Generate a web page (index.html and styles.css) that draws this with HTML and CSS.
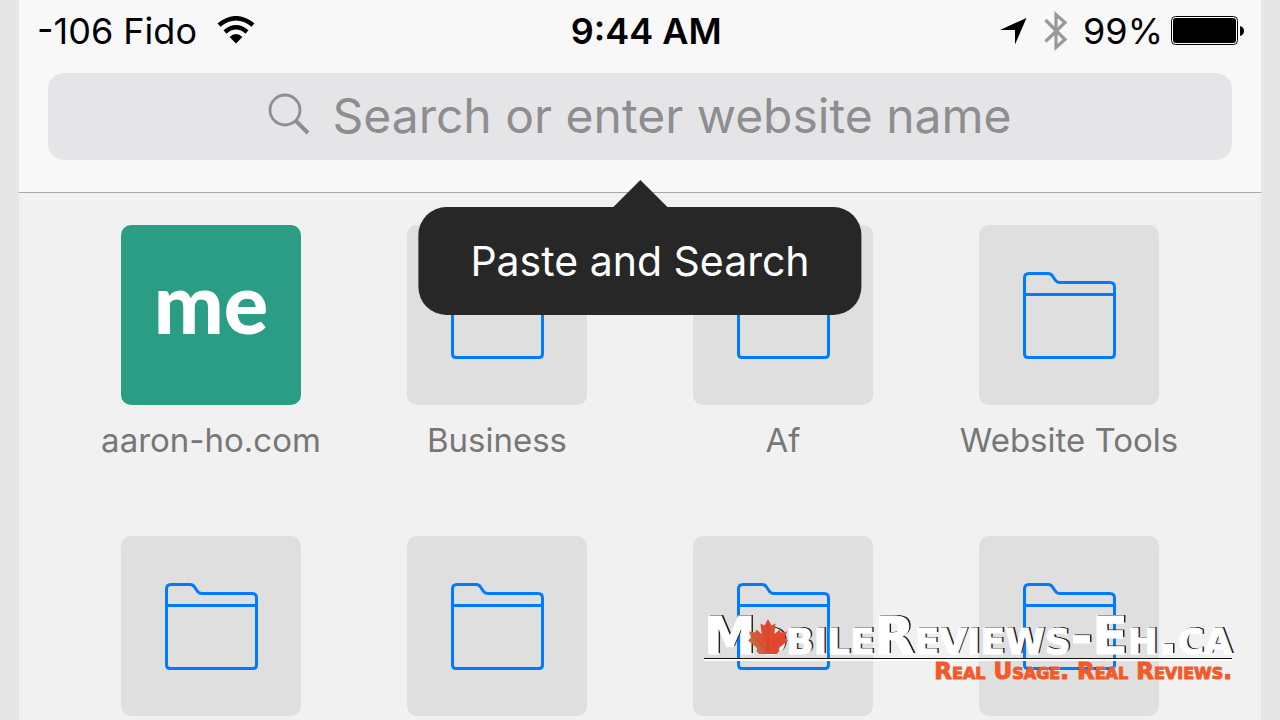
FILE: index.html
```html
<!DOCTYPE html>
<html lang="en">
<head>
  <meta charset="utf-8">
  <title>Favorites</title>
  <meta name="viewport" content="width=device-width, initial-scale=1.0">
  <link rel="stylesheet" href="styles.css">
</head>
<body>
  <svg class="sprite" aria-hidden="true">
    <symbol id="folder" viewBox="-1 -1 94 88">
      <path d="M1.500 22.500V6Q1.500 1.500 6 1.500H25Q28 1.500 29.500 4L33 9Q34.500 10.500 37 10.500H87Q91.500 10.500 91.500 15V82Q91.500 85.500 88 85.500H5Q1.500 85.500 1.500 82ZM1.500 22.500H91.500" fill="none" stroke="#007aff" stroke-width="3"/>
    </symbol>
  </svg>

  <div class="screen">
    <header class="header">
      <div class="status">
        <div class="status-left">
          <span>-106 Fido</span>
          <svg class="wifi" viewBox="0 0 38 28" aria-hidden="true">
            <path d="M2 9Q19 -4.500 36 9" fill="none" stroke="#000" stroke-width="4.500"/>
            <path d="M8 16Q19 6.500 30 16" fill="none" stroke="#000" stroke-width="4.500"/>
            <path d="M12.500 21Q19 15 25.500 21L19 27.500Z"/>
          </svg>
        </div>
        <div class="status-time">9:44 AM</div>
        <div class="status-right">
          <svg class="location" viewBox="0 0 27 27" aria-hidden="true"><path d="M26.500 0L15 26.500V12H0Z"/></svg>
          <svg class="bluetooth" viewBox="0 0 24 42" aria-hidden="true">
            <path d="M1.500 10L21 29.500L12 37.500V4.500L21 12.500L1.500 31.500" fill="none" stroke="#999" stroke-width="3.200"/>
          </svg>
          <span>99%</span>
          <svg class="battery" viewBox="0 0 74 30" aria-hidden="true">
            <rect x="0.500" y="0.500" width="66" height="28" rx="4" fill="#fff" stroke="#000"/>
            <rect x="2" y="2" width="63" height="25" rx="3"/>
            <path d="M69 10Q73 11 73 15T69 20Z"/>
          </svg>
        </div>
      </div>

      <form class="search">
        <label class="search-box">
          <svg class="search-icon" viewBox="0 0 42 42" aria-hidden="true">
            <circle cx="17" cy="17" r="15" fill="none" stroke="#8e8e93" stroke-width="2.800"/>
            <path d="M27.500 27.500L40 40" stroke="#8e8e93" stroke-width="4"/>
          </svg>
          <input class="search-input" type="text" placeholder="Search or enter website name" aria-label="Search or enter website name">
        </label>
        <button class="popover" type="button">Paste and Search</button>
      </form>
    </header>

    <main class="favorites">
      <a class="favorite" href="#">
        <span class="tile tile-me">me</span>
        <span class="name">aaron-ho.com</span>
      </a>
      <a class="favorite" href="#">
        <span class="tile"><svg class="folder"><use href="#folder"/></svg></span>
        <span class="name">Business</span>
      </a>
      <a class="favorite" href="#">
        <span class="tile"><svg class="folder"><use href="#folder"/></svg></span>
        <span class="name">Af</span>
      </a>
      <a class="favorite" href="#">
        <span class="tile"><svg class="folder"><use href="#folder"/></svg></span>
        <span class="name">Website Tools</span>
      </a>
      <a class="favorite" href="#"><span class="tile"><svg class="folder"><use href="#folder"/></svg></span></a>
      <a class="favorite" href="#"><span class="tile"><svg class="folder"><use href="#folder"/></svg></span></a>
      <a class="favorite" href="#"><span class="tile"><svg class="folder"><use href="#folder"/></svg></span></a>
      <a class="favorite" href="#"><span class="tile"><svg class="folder"><use href="#folder"/></svg></span></a>
    </main>
  </div>

  <div class="watermark">
    <div class="brand">
      MobileReviews-Eh.ca
      <svg class="leaf" viewBox="0 0 40 36" aria-hidden="true">
        <defs>
          <linearGradient id="leaf-fill" x1="0" y1="0.700" x2="1" y2="0.300">
            <stop offset="0" stop-color="#bd7440"/>
            <stop offset="0.450" stop-color="#e0492f"/>
            <stop offset="1" stop-color="#e8472f"/>
          </linearGradient>
        </defs>
        <path d="M20 0L23.500 6.500L27.500 4.500L26.500 15L31.500 10.500L33 13.500L39 12.500L37 18.500L40 21.500L31 29L31.500 32L29 35H11L8.500 32L9 29L0 21.500L3 18.500L1 12.500L7 13.500L8.500 10.500L13.500 15L12.500 4.500L16.500 6.500Z" fill="url(#leaf-fill)"/>
        <path d="M20 3V35M20 32L4 16M20 32L36 16" fill="none" stroke="#c23a26" stroke-width="0.600"/>
      </svg>
    </div>
    <div class="tagline">Real Usage. Real Reviews.</div>
  </div>
</body>
</html>
```
FILE: styles.css
```css
body {
  margin: 0;
  background: #e6e6e6;
  font-family: Inter, "Liberation Sans", sans-serif;
}

.sprite {
  position: absolute;
  width: 0;
  height: 0;
}

.screen {
  margin: 0 19px;
  min-height: 100vh;
  background: #f1f1f1;
}

.header {
  background: #f8f8f8;
  border-bottom: 1px solid #a8a8aa;
  padding-bottom: 32px;
}

.status {
  display: grid;
  grid-template-columns: 1.02fr auto 1fr;
  align-items: center;
  height: 62px;
  padding: 0 16px 0 18px;
  margin-bottom: 11px;
  font-size: 36px;
  color: #000;
}

.status-left,
.status-right {
  display: flex;
  align-items: center;
}

.status-left {
  gap: 20px;
}

.status-right {
  justify-content: flex-end;
}

.status-time {
  font-weight: 600;
}

.wifi {
  width: 38px;
  height: 28px;
  margin-bottom: 2px;
}

.location {
  width: 27px;
  height: 27px;
  margin-right: 17px;
}

.bluetooth {
  width: 24px;
  height: 42px;
  margin-right: 15px;
}

.battery {
  width: 74px;
  height: 30px;
  margin-left: 8px;
}

.search {
  position: relative;
  margin: 0 29px;
}

.search-box {
  display: flex;
  justify-content: center;
  align-items: center;
  gap: 22px;
  height: 87px;
  border-radius: 16px;
  background: #e5e5e7;
}

.search-icon {
  width: 42px;
  height: 42px;
  margin-bottom: 6px;
}

.search-input {
  field-sizing: content;
  padding: 0 0 2px;
  border: none;
  outline: none;
  background: none;
  font-family: inherit;
  font-size: 48px;
}

.search-input::placeholder {
  color: #8e8e90;
}

.popover {
  position: absolute;
  top: calc(100% + 47px);
  left: 50%;
  transform: translateX(-50%);
  height: 108px;
  padding: 0 52px;
  border: none;
  border-radius: 28px;
  background: #272727;
  color: #fff;
  font-family: inherit;
  font-size: 41px;
  white-space: nowrap;
  cursor: pointer;
}

.popover::before {
  content: "";
  position: absolute;
  bottom: 100%;
  left: 50%;
  transform: translateX(-50%);
  border: 27px solid transparent;
  border-top: none;
  border-bottom-color: #272727;
}

.favorites {
  display: grid;
  grid-template-columns: repeat(4, 1fr);
  row-gap: 76px;
  padding: 32px 49px 4px;
}

.favorite {
  display: flex;
  flex-direction: column;
  align-items: center;
  gap: 15px;
  color: #777;
  text-decoration: none;
}

.tile {
  display: flex;
  justify-content: center;
  align-items: center;
  width: 180px;
  height: 180px;
  border-radius: 10px;
  background: #dfdfdf;
}

.tile-me {
  align-items: flex-start;
  background: #2b9d84;
  color: #fff;
  font-family: Lato, sans-serif;
  font-size: 83px;
  font-weight: 900;
  line-height: 154px;
}

.folder {
  width: 94px;
  height: 88px;
}

.name {
  font-size: 33px;
  line-height: 40px;
  white-space: nowrap;
}

/* site mark over the bottom right corner */
.watermark {
  position: absolute;
  right: 48px;
  bottom: 40px;
  font-family: "DejaVu Sans", sans-serif;
  font-weight: 700;
  font-variant: small-caps;
  text-align: right;
  white-space: nowrap;
}

.brand {
  position: relative;
  height: 41px;
  border-bottom: 1px solid #111;
  box-shadow: 0 2px 0 #fff;
  color: #fff;
  font-size: 52px;
  line-height: 38px;
  -webkit-text-stroke: 1px #fff;
  text-shadow: 1px -1px 0 #222, 2px -1px 0 #222;
}

.leaf {
  position: absolute;
  left: 44px;
  bottom: 3px;
  width: 40px;
  height: 36px;
}

.tagline {
  margin-top: 3px;
  color: #f15a29;
  font-size: 23px;
  line-height: 18px;
  -webkit-text-stroke: 1px #f15a29;
}
```
